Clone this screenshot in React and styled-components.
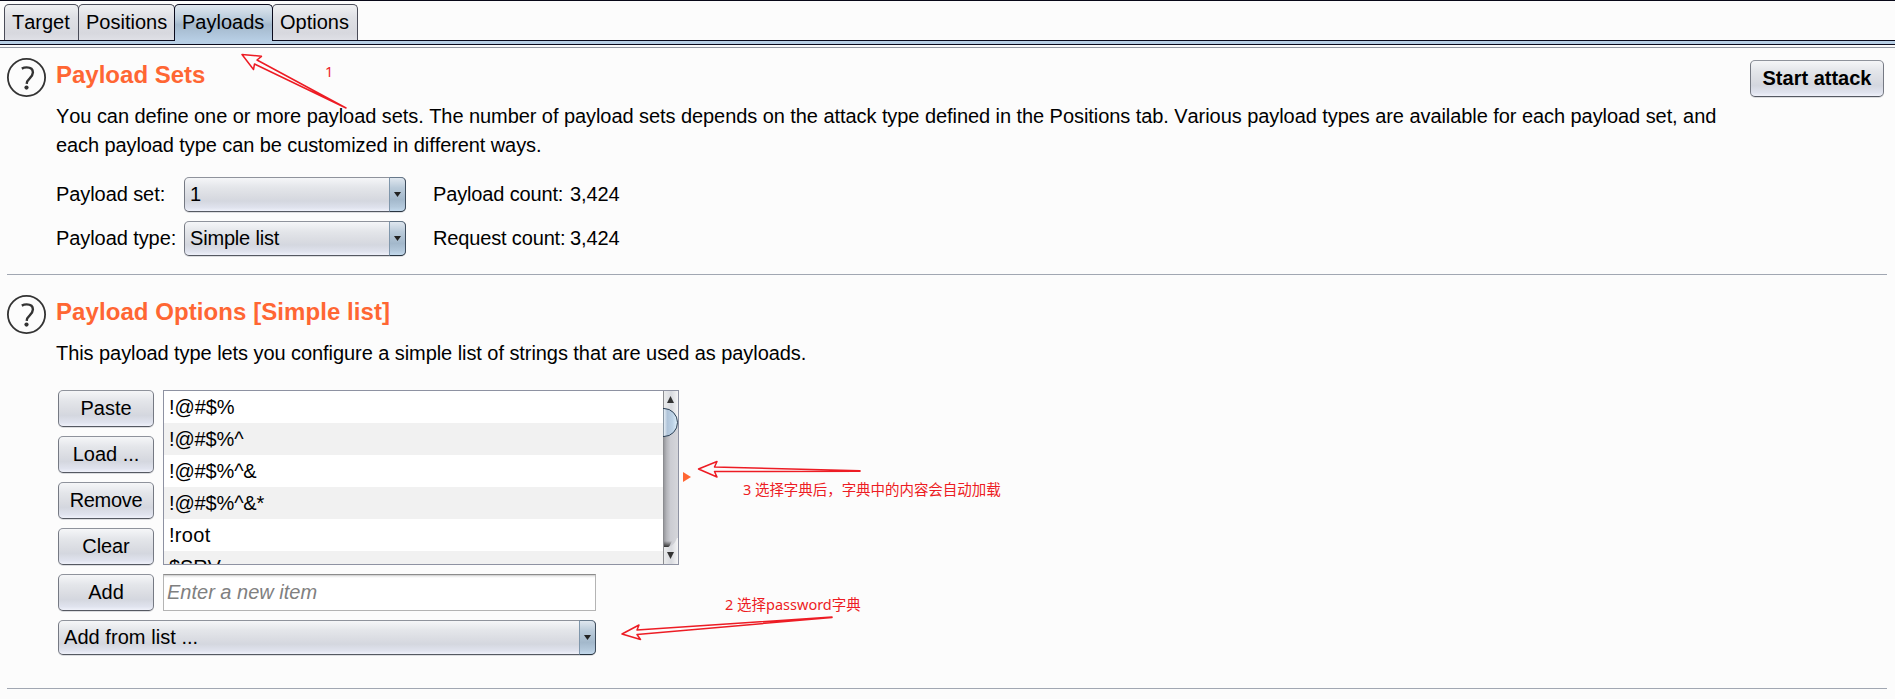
import React from "react";
import styled, { createGlobalStyle, css } from "styled-components";

const Global = createGlobalStyle`
  * { box-sizing: border-box; }
  body {
    margin: 0;
    background: #fcfcfc;
    color: #000;
    font: 20px/24px "Liberation Sans", Arial, sans-serif;
    font-kerning: none;
    overflow: hidden;
  }
`;

const metal = css`
  background: linear-gradient(#f5f6f8 0%, #e4e6ea 28%, #dadce2 55%, #d4d7df 70%, #e0e3ee 90%, #eff1fa 100%);
  border: 1px solid;
  border-color: #8f939c #757983 #555962;
  border-radius: 5px;
  box-shadow: 0 1px 0 #dcdde0;
`;

const steel = css`
  background: linear-gradient(#dfe7ef 0%, #b9cad9 30%, #a3b8cb 65%, #b4c9dc 88%, #c3d9ec 100%);
`;

const Page = styled.main`
  position: relative;
  width: 1895px;
  height: 699px;
  overflow: hidden;
  border-top: 1px solid #080818;
`;

const TabBar = styled.nav`
  display: flex;
  height: 40px;
  padding: 3px 0 0 4px;
`;

const Tab = styled.div`
  width: ${(p) => p.$width}px;
  height: ${(p) => (p.$active ? 37 : 36)}px;
  margin-right: -1px;
  padding: 5px 0 0 7px;
  border: 1px solid #4a4c58;
  border-bottom: 0;
  border-radius: 5px 5px 0 0;
  background: linear-gradient(#f0f1f3, #dfe0e5 35%, #d7d8de 80%, #dfe0e6);
  z-index: 1;
  ${(p) => p.$active && css`
    border-color: #0a0a1c;
    background: linear-gradient(#dfe7ef, #b9cbdb 40%, #a3b8cc 55%, #b8cfe5);
    z-index: 2;
  `}
`;

const TabRule = styled.div`
  height: 5px;
  margin-top: -1px;
  background: #b8cfe5;
  border-top: 1px solid #0a0a1c;
  border-bottom: 1px solid #0a0a1c;
`;

const PanelEdge = styled.div`
  height: 1px;
  margin-top: 2px;
  background: #9297a1;
`;

const Section = styled.section`
  display: grid;
  grid-template-columns: 50px 1660px 1fr;
  margin-left: 7px;
  height: ${(p) => p.$height}px;
  padding-top: ${(p) => p.$top}px;
  margin-right: 8px;
  border-bottom: 1px solid #a1a7b2;
`;

const Heading = styled.h2`
  margin: 3px 0 13px -1px;
  font-size: 24px;
  line-height: 28px;
  font-weight: bold;
  color: #ff6633;
  white-space: nowrap;
  letter-spacing: ${(p) => p.$spacing || 0}px;
`;

const Copy = styled.p`
  margin: 0 0 0 -1px;
  line-height: 29px;
  white-space: nowrap;
`;

const Line = styled.span`
  display: block;
  width: max-content;
  letter-spacing: ${(p) => p.$spacing || 0}px;
`;

const HelpSvg = styled.svg`
  display: block;
  width: 40px;
  height: 40px;
`;

const SettingsGrid = styled.div`
  display: grid;
  grid-template-columns: 128px 222px auto;
  grid-auto-rows: 35px;
  row-gap: 9px;
  margin: 17px 0 0 -1px;
  line-height: 35px;
  letter-spacing: -0.08px;
  white-space: nowrap;
`;

const Count = styled.span`
  display: flex;
  padding-left: 27px;
  & > span:first-child {
    width: 137px;
    letter-spacing: -0.15px;
  }
`;

const SelectBox = styled.div`
  ${metal}
  display: flex;
  justify-content: space-between;
  width: ${(p) => p.$width}px;
  height: 35px;
  padding-left: 5px;
  line-height: 33px;
  letter-spacing: ${(p) => p.$spacing || 0}px;
`;

const SelectCap = styled.span`
  ${steel}
  display: flex;
  align-items: center;
  justify-content: center;
  width: 17px;
  margin: -1px;
  border: 1px solid;
  border-color: #66788a #3d4c5c #26333f #7f96ab;
  border-radius: 0 5px 5px 0;
`;

const Button = styled.button`
  ${metal}
  width: ${(p) => p.$width || 96}px;
  height: 37px;
  padding: 0 0 1px;
  font: inherit;
  font-kerning: none;
  font-weight: ${(p) => (p.$strong ? "bold" : "normal")};
  letter-spacing: ${(p) => p.$spacing || 0}px;
  line-height: 24px;
  color: #000;
`;

const AttackCell = styled.div`
  display: flex;
  justify-content: flex-end;
  align-items: flex-start;
  padding: 2px 3px 0 0;
`;

const ListEditor = styled.div`
  display: flex;
  gap: 9px;
  margin: 22px 0 0 1px;
`;

const ButtonColumn = styled.div`
  display: flex;
  flex-direction: column;
  gap: 9px;
`;

const ListBox = styled.div`
  display: flex;
  width: 516px;
  height: 175px;
  border: 1px solid #8e92a2;
  background: #fff;
  overflow: hidden;
`;

const Rows = styled.div`
  flex: 1;
`;

const Row = styled.div`
  height: 32px;
  padding: 4px 0 0 5px;
  background: ${(p) => (p.$shaded ? "#f1f1f1" : "#fff")};
  letter-spacing: ${(p) => p.$spacing}px;
  white-space: nowrap;
`;

const Marker = styled.svg`
  width: 8px;
  height: 10px;
  margin: 82px 0 0 -5px;
`;

const AddRow = styled.div`
  display: flex;
  gap: 9px;
  margin: 9px 0 9px 1px;
`;

const ItemInput = styled.input`
  width: 433px;
  height: 37px;
  padding: 0 0 0 3px;
  border: 1px solid #b4b4b4;
  border-top-color: #8c8c8c;
  border-radius: 0;
  background: linear-gradient(#c4c4c4 0, #e9e9e9 1px, #fff 3px);
  font: italic 20px "Liberation Sans", Arial, sans-serif;
  font-kerning: none;
  outline: 0;
  &::placeholder { color: #808080; opacity: 1; }
`;

const SelectIndent = styled.div`
  margin-left: 1px;
`;

const Overlay = styled.svg`
  position: absolute;
  left: 0;
  top: -1px;
  width: 1895px;
  height: 699px;
  pointer-events: none;
`;

const Note = styled.span`
  position: absolute;
  left: ${(p) => p.$x}px;
  top: ${(p) => p.$y}px;
  color: #ed1c24;
  font: 14.5px/20px "Noto Sans", "Noto Sans CJK SC", sans-serif;
  letter-spacing: ${(p) => p.$spacing || 0}px;
  white-space: nowrap;
`;

const HelpIcon = () => (
  <HelpSvg viewBox="0 0 40 40" fill="none" stroke="#333333">
    <circle cx="19.5" cy="19.5" r="18.6" strokeWidth="1.8" />
    <path d="M14.8 10.6c1.500-.8 3.100-1.200 4.900-1.200 3.900 0 6.200 2 6.200 5.200 0 2.600-1.400 4-3.200 5.700-1.900 1.700-2.900 3-3 5.600" strokeWidth="2.400" />
    <circle cx="19.500" cy="29.600" r="2.100" fill="#333333" stroke="none" />
  </HelpSvg>
);

const ScrollBar = () => (
  <svg width="15" height="173" viewBox="0 0 15 173">
    <defs>
      <linearGradient id="track"><stop offset="0" stopColor="#8e8f93" /><stop offset=".25" stopColor="#b5b6bb" /><stop offset=".5" stopColor="#cbccd2" /><stop offset="1" stopColor="#d5d6db" /></linearGradient>
      <linearGradient id="cap"><stop offset="0" stopColor="#eceded" /><stop offset=".55" stopColor="#d8dadf" /><stop offset="1" stopColor="#f5f5f6" /></linearGradient>
      <linearGradient id="thumb"><stop offset="0" stopColor="#f2f7fb" /><stop offset=".3" stopColor="#b0c4d9" /><stop offset=".65" stopColor="#bcd2e6" /><stop offset="1" stopColor="#e0f0fb" /></linearGradient>
      <linearGradient id="shade" x2="0" y2="1"><stop offset="0" stopColor="#333" stopOpacity="0" /><stop offset="1" stopColor="#333" /></linearGradient>
    </defs>
    <rect width="15" height="173" fill="url(#track)" />
    <path d="M0 0h15v31q-3-13-15-14z" fill="url(#cap)" />
    <path d="M0 17.500h1a13.500 14 0 0 1 0 28H0z" fill="url(#thumb)" stroke="#2b3f53" />
    <path d="M0 150h9l-3 6H0z" fill="url(#shade)" />
    <path d="M0 156h5q6-1 9-9h1v26H0z" fill="url(#cap)" />
    <path d="M.5 0v17M.5 46v127" stroke="#8b8c90" />
    <path d="M7.500 5l3.500 7H4z" fill="#333" />
    <path d="M4 161h7l-3.500 7z" fill="#333" />
  </svg>
);

const Select = ({ width, spacing, children }) => (
  <SelectBox $width={width} $spacing={spacing}>
    <span>{children}</span>
    <SelectCap>
      <svg width="7" height="5"><path d="M0 0h7L3.500 5z" fill="#222" /></svg>
    </SelectCap>
  </SelectBox>
);

const items = [
  { text: "!@#$%", spacing: -0.1 },
  { text: "!@#$%^", spacing: -0.15 },
  { text: "!@#$%^&", spacing: -0.15 },
  { text: "!@#$%^&*", spacing: -0.15 },
  { text: "!root", spacing: 0.3 },
  { text: "$SRV", spacing: -0.1 },
];

export default function App() {
  return (
    <>
      <Global />
      <Page>
        <TabBar>
          <Tab $width={75}>Target</Tab>
          <Tab $width={97}>Positions</Tab>
          <Tab $width={99} $active>Payloads</Tab>
          <Tab $width={86}>Options</Tab>
        </TabBar>
        <TabRule />
        <PanelEdge />

        <Section $height={227} $top={10}>
          <HelpIcon />
          <div>
            <Heading>Payload Sets</Heading>
            <Copy>
              <Line $spacing={-0.064}>You can define one or more payload sets. The number of payload sets depends on the attack type defined in the Positions tab. Various payload types are available for each payload set, and</Line>
              <Line $spacing={-0.09}>each payload type can be customized in different ways.</Line>
            </Copy>
            <SettingsGrid>
              <span>Payload set:</span>
              <Select width={222}>1</Select>
              <Count><span>Payload count:</span><span>3,424</span></Count>
              <span>Payload type:</span>
              <Select width={222} spacing={-0.18}>Simple list</Select>
              <Count><span>Request count:</span><span>3,424</span></Count>
            </SettingsGrid>
          </div>
          <AttackCell><Button $width={134} $strong>Start attack</Button></AttackCell>
        </Section>

        <Section $height={414} $top={20}>
          <HelpIcon />
          <div>
            <Heading $spacing={0.07}>Payload Options [Simple list]</Heading>
            <Copy><Line $spacing={-0.065}>This payload type lets you configure a simple list of strings that are used as payloads.</Line></Copy>
            <ListEditor>
              <ButtonColumn>
                <Button>Paste</Button>
                <Button>Load ...</Button>
                <Button $spacing={-0.3}>Remove</Button>
                <Button $spacing={-0.1}>Clear</Button>
              </ButtonColumn>
              <ListBox>
                <Rows>
                  {items.map((item, i) => (
                    <Row key={item.text} $shaded={i % 2 === 1} $spacing={item.spacing}>{item.text}</Row>
                  ))}
                </Rows>
                <ScrollBar />
              </ListBox>
              <Marker viewBox="0 0 8 10"><path d="M0 0l8 5-8 5z" fill="#ff6633" /></Marker>
            </ListEditor>
            <AddRow>
              <Button>Add</Button>
              <ItemInput placeholder="Enter a new item" />
            </AddRow>
            <SelectIndent><Select width={538} spacing={0.05}>Add from list ...</Select></SelectIndent>
          </div>
        </Section>

        <Overlay fill="none" stroke="#ed1c24" strokeWidth="1.5" strokeLinejoin="round">
          <path d="M242 54.500l19.500 1.800-4.500 3.700L346 108l-91.500-44-1 5.500z" />
          <path d="M698.500 469l18.500-7.500-2.500 5.500 145.500 3.700v.6l-145.500.2 2.500 5.500z" />
          <path d="M622 634l17-9-2 5 195-13v.5l-195 17 3.500 5z" />
        </Overlay>
        <Note $x={325} $y={60}>1</Note>
        <Note $x={743} $y={478} $spacing={-0.05}>3 选择字典后，字典中的内容会自动加载</Note>
        <Note $x={725} $y={593}>2 选择password字典</Note>
      </Page>
    </>
  );
}
